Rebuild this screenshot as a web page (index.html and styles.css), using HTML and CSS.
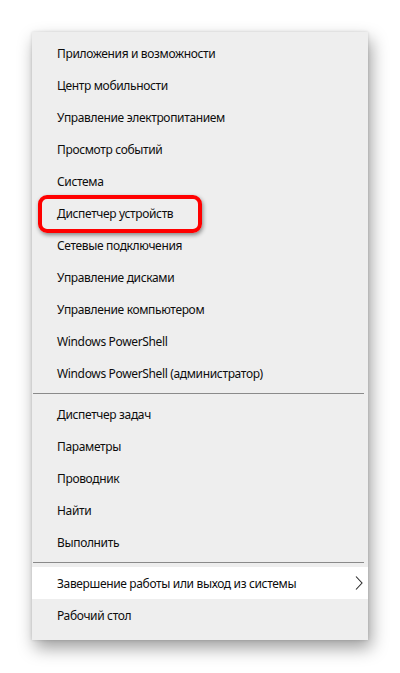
FILE: index.html
```html
<!DOCTYPE html>
<html lang="ru">
<head>
<meta charset="utf-8">
<link rel="stylesheet" href="styles.css">
</head>
<body>
<div class="menu">
  <div class="group">
    <div class="item">Приложения и возможности</div>
    <div class="item">Центр мобильности</div>
    <div class="item">Управление электропитанием</div>
    <div class="item">Просмотр событий</div>
    <div class="item">Система</div>
    <div class="item">Диспетчер устройств</div>
    <div class="item">Сетевые подключения</div>
    <div class="item">Управление дисками</div>
    <div class="item">Управление компьютером</div>
    <div class="item">Windows PowerShell</div>
    <div class="item">Windows PowerShell (администратор)</div>
  </div>
  <div class="sep"></div>
  <div class="group">
    <div class="item">Диспетчер задач</div>
    <div class="item">Параметры</div>
    <div class="item">Проводник</div>
    <div class="item">Найти</div>
    <div class="item">Выполнить</div>
  </div>
  <div class="sep"></div>
  <div class="group">
    <div class="item active">Завершение работы или выход из системы
      <svg class="chev" width="8" height="14" viewBox="0 0 8 14"><path d="M1 0.5 L7 7 L1 13.5" fill="none" stroke="#2a2a2a" stroke-width="1.1"/></svg>
    </div>
    <div class="item">Рабочий стол</div>
  </div>
  <div class="highlight"></div>
</div>
</body>
</html>
```
FILE: styles.css
```css
html, body {
  margin: 0;
  padding: 0;
  background: #ffffff;
}
body {
  width: 400px;
  height: 673px;
  overflow: hidden;
  font-family: "Noto Sans", "Open Sans", sans-serif;
}
.menu {
  position: relative;
  margin: 32px 0 0 32px;
  width: 336px;
  height: 608px;
  box-sizing: border-box;
  padding: 5px 0 8px 0;
  background: #eeeeee;
  box-shadow: 3px 8px 16px rgba(0, 0, 0, 0.38), 0 0 3px rgba(0, 0, 0, 0.15);
  display: flex;
  flex-direction: column;
}
.item {
  height: 32px;
  display: flex;
  align-items: center;
  padding-left: 25px;
  font-size: 12px;
  letter-spacing: -0.35px;
  color: #0d0d0d;
  position: relative;
}
.item.active {
  background: #ffffff;
}
.chev {
  position: absolute;
  right: 5px;
  top: 9px;
}
.sep {
  height: 9px;
  display: flex;
  align-items: center;
  margin: 0 4px 0 1px;
}
.sep::before {
  content: "";
  display: block;
  width: 100%;
  height: 1px;
  background: #8a8a8a;
}
.highlight {
  position: absolute;
  left: 6px;
  top: 163px;
  width: 164px;
  height: 38px;
  box-sizing: border-box;
  border: 4px solid #ff0000;
  border-radius: 9px;
  box-shadow: 1px 2px 4px rgba(0, 0, 0, 0.45);
}
```
